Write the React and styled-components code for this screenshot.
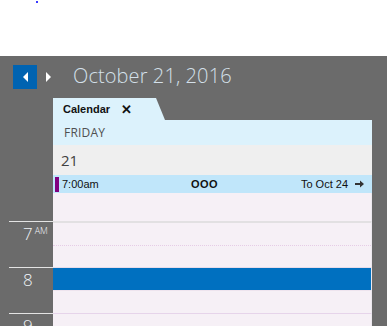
import React from 'react'
import styled, { createGlobalStyle } from 'styled-components';

const Global = createGlobalStyle`
  html, body { margin: 0; padding: 0; background: #fff; }
  body { font-family: "Open Sans", "Noto Sans", sans-serif; overflow: hidden; }
`;

// page frame

const TopStrip = styled.div`
  height: 56px;
  background: #fff;
  padding: 1px 0 0 36px;
  box-sizing: border-box;
`;

const Speck = styled.span`
  display: block;
  width: 2px;
  height: 2px;
  background: #3a3aff;
`;

const Main = styled.div`
  height: 270px;
  background: #6b6b6b;
  overflow: hidden;
`;

// date navigation

const NavBar = styled.div`
  display: flex;
  align-items: center;
  height: 42px;
  padding-left: 13px;
  box-sizing: border-box;
`;

const NavButton = styled.div`
  width: ${p => p.w || 24}px;
  height: 24px;
  display: flex;
  align-items: center;
  justify-content: center;
  background: ${p => (p.active ? '#0063b1' : 'transparent')};
  margin-right: ${p => p.gap || 0}px;
`;

const Title = styled.div`
  font-size: 20px;
  font-weight: 300;
  color: #d4e0ea;
  margin-left: 16px;
  margin-top: -3px;
  letter-spacing: 0.1px;
`;

// panel

const Panel = styled.div`
  margin-left: 53px;
  width: 319px;
`;

const TabRow = styled.div`
  display: flex;
  height: 22px;
  background: #6b6b6b;
`;

const Tab = styled.div`
  position: relative;
  width: 103px;
  background: #dcf2fc;
  display: flex;
  align-items: center;
  padding-left: 10px;
  box-sizing: border-box;
  font-family: "Liberation Sans", Arial, sans-serif;
  font-size: 11px;
  font-weight: bold;
  color: #111;
  &::after {
    content: '';
    position: absolute;
    right: -9px;
    top: 0;
    width: 9px;
    height: 22px;
    background: #dcf2fc;
    clip-path: polygon(0 0, 0 100%, 100% 100%);
  }
`;

const Close = styled.span`
  margin-left: 11px;
  font-size: 13px;
  line-height: 1;
`;

const DayName = styled.div`
  height: 25px;
  background: #dcf2fc;
  display: flex;
  align-items: center;
  padding-left: 11px;
  font-size: 12px;
  color: #505050;
  letter-spacing: 0.2px;
`;

const DayNum = styled.div`
  height: 30px;
  background: #efefef;
  display: flex;
  align-items: center;
  padding-left: 8px;
  font-size: 15px;
  color: #404040;
`;

const EventRow = styled.div`
  height: 18px;
  background: #c0e6fa;
  display: flex;
  align-items: center;
  font-family: "Liberation Sans", Arial, sans-serif;
  font-size: 11px;
  color: #111;
  padding-right: 8px;
`;

const EventMark = styled.span`
  width: 4px;
  height: 15px;
  background: #800080;
  margin: 0 3px 0 2px;
`;

const EventTime = styled.span`
  width: 129px;
`;

const EventTitle = styled.span`
  font-weight: bold;
  letter-spacing: 0.5px;
  flex: 1;
`;

const EventEnd = styled.span`
  display: flex;
  align-items: center;
  gap: 7px;
`;

// timeline

const Hour = styled.div`
  display: flex;
  height: ${p => p.h}px;
`;

const Gutter = styled.div`
  flex: 0 0 44px;
  margin-left: 9px;
  border-top: ${p => (p.line ? '1px solid #e4e4e4' : '0')};
  box-sizing: border-box;
  padding: 3px 0 0 14px;
  color: #f0f4f8;
  font-size: 17px;
  font-weight: 300;
  line-height: 1;
`;

const Meridiem = styled.sup`
  font-size: 9px;
  margin-left: 2px;
  position: relative;
  top: 1px;
`;

const Cells = styled.div`
  flex: 0 0 319px;
  display: flex;
  flex-direction: column;
  border-top: ${p => p.top || '0'};
  border-right: 1px solid #ece8ee;
  box-sizing: border-box;
`;

const Slot = styled.div`
  flex: 1;
  background: ${p => (p.selected ? '#0070c0' : '#f6f0f6')};
  border-top: ${p => p.divider || '0'};
`;

function Triangle({ dir }) {
  const pts = dir === 'left' ? '6,0 6,10 1,5' : '0,0 0,10 5,5';
  return (
    <svg width="7" height="10" viewBox="0 0 7 10">
      <polygon points={pts} fill="#fff" />
    </svg>
  );
}

function Arrow() {
  return (
    <svg width="9" height="8" viewBox="0 0 9 8">
      <path d="M0 3h5V0.5L9 4 5 7.5V5H0z" fill="#333" />
    </svg>
  );
}

export default function App() {
  return (
    <>
      <Global />
      <TopStrip><Speck /></TopStrip>
      <Main>
        <NavBar>
          <NavButton active gap={4}><Triangle dir="left" /></NavButton>
          <NavButton w={16}><Triangle dir="right" /></NavButton>
          <Title>October 21, 2016</Title>
        </NavBar>
        <Panel>
          <TabRow>
            <Tab>Calendar<Close>✕</Close></Tab>
          </TabRow>
          <DayName>FRIDAY</DayName>
          <DayNum>21</DayNum>
          <EventRow>
            <EventMark />
            <EventTime>7:00am</EventTime>
            <EventTitle>OOO</EventTitle>
            <EventEnd>To Oct 24 <Arrow /></EventEnd>
          </EventRow>
        </Panel>
        <Hour h={28}>
          <Gutter />
          <Cells><Slot /></Cells>
        </Hour>
        <Hour h={46}>
          <Gutter line>7<Meridiem>AM</Meridiem></Gutter>
          <Cells top="2px solid #e2e0e2">
            <Slot />
            <Slot divider="1px dotted #e6cce6" />
          </Cells>
        </Hour>
        <Hour h={46}>
          <Gutter line>8</Gutter>
          <Cells top="1px solid #e6dcea">
            <Slot selected />
            <Slot divider="1px solid #eee4ee" />
          </Cells>
        </Hour>
        <Hour h={46}>
          <Gutter line>9</Gutter>
          <Cells top="1px solid #e6d4ea">
            <Slot />
            <Slot />
          </Cells>
        </Hour>
      </Main>
    </>
  );
}
